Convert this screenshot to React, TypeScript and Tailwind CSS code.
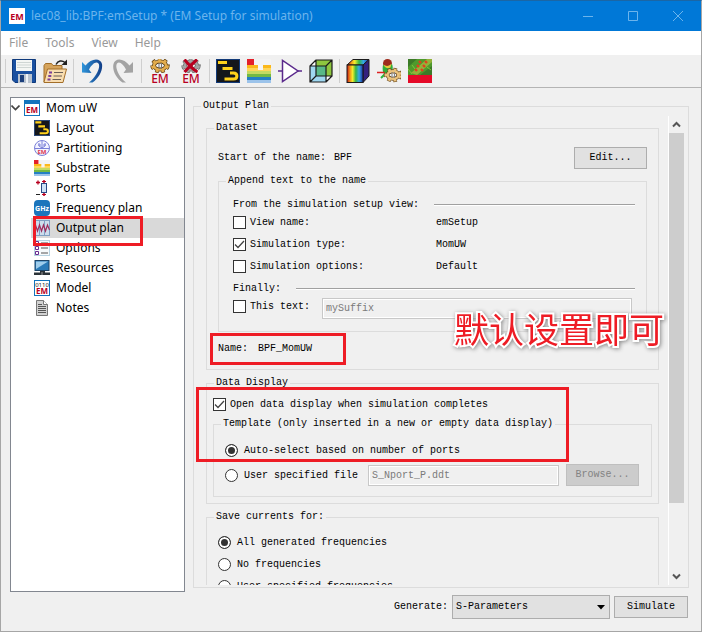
import { useState, type ReactNode } from "react";

const MONO = "font-['Liberation_Mono','Noto_Sans_CJK_SC',monospace] text-[10px] leading-4";

/* ---------- icons ---------- */

function Svg({ size, box = 24, children }: { size: number; box?: number; children: ReactNode }) {
  return (
    <svg width={size} height={size} viewBox={`0 0 ${box} ${box}`} className="block shrink-0" aria-hidden="true">
      {children}
    </svg>
  );
}

const RED = "#b8001f";
const EM_FONT = "'Noto Sans', 'Open Sans', sans-serif";

function EmText({ x, y, size, bold }: { x: number; y: number; size: number; bold?: boolean }) {
  return (
    <text x={x} y={y} textAnchor="middle" fontSize={size} fontWeight={bold ? 700 : 500} fontFamily={EM_FONT} fill={RED}>
      EM
    </text>
  );
}

function Gear({ cx, cy, r, fill, stroke }: { cx: number; cy: number; r: number; fill: string; stroke: string }) {
  return (
    <g>
      <ellipse cx={cx} cy={cy} rx={r} ry={r * 0.7} fill="none" stroke={stroke} strokeWidth="5.4" strokeDasharray="3 2.2" />
      <ellipse cx={cx} cy={cy} rx={r - 1} ry={r * 0.7 - 0.8} fill="none" stroke={stroke} strokeWidth="4" />
      <ellipse cx={cx} cy={cy} rx={r} ry={r * 0.7} fill="none" stroke={fill} strokeWidth="4" strokeDasharray="2.4 2.8" strokeDashoffset="-0.3" />
      <ellipse cx={cx} cy={cy} rx={r - 1} ry={r * 0.7 - 0.8} fill="none" stroke={fill} strokeWidth="2.4" />
    </g>
  );
}

function SaveIcon() {
  return (
    <Svg size={24}>
      <path d="M1 0.5h22.5v23H3L0.5 21V0.5z" fill="#1a50a0" stroke="#0f3a7c" />
      <rect x="4" y="1" width="16" height="11" fill="#f4f6f4" />
      <path d="M5 3.5h14M5 6h14M5 8.5h14" stroke="#cfd6d4" />
      <rect x="6" y="15" width="14" height="9" fill="#b9c3cf" />
      <rect x="8" y="16" width="4" height="7" fill="#1c3f7c" />
      <rect x="14" y="15" width="2" height="9" fill="#eef1f5" />
    </Svg>
  );
}

function OpenIcon() {
  return (
    <Svg size={24}>
      <path d="M1 23V6.5l1.500-2h6l1.500 2h9V11" fill="#d6a45c" stroke="#a36e28" />
      <path d="M1 23L4.500 10h19L20 23.500H1z" fill="#f8ddb0" stroke="#a36e28" />
      <path d="M6 13.500h3M5.300 17h3M4.500 20.500h3" stroke="#7b3f98" strokeWidth="2" />
      <path d="M11 13.500h9M10.500 17h8.500M9.500 20.500h8.500" stroke="#6b5f58" />
      <path d="M13 5.500C15 1.500 19 1 22 3.500" fill="none" stroke="#222" strokeWidth="1.500" />
      <path d="M24 0.500V6h-5.500z" fill="#222" />
    </Svg>
  );
}

function UndoIcon() {
  return (
    <Svg size={24}>
      <defs>
        <linearGradient id="undoFill" x1="0" x2="1">
          <stop offset="0" stopColor="#2f95da" />
          <stop offset="1" stopColor="#123e88" />
        </linearGradient>
      </defs>
      <path d="M2 3v10.500L11.500 14 9 10.500C12 5 16 2 18.500 4.500 21 8 16 18 9 23.500h3.500C19 19 23 11 22 5 20.500-1.500 11-1 5.500 6.500z" fill="url(#undoFill)" />
    </Svg>
  );
}

function RedoIcon() {
  return (
    <Svg size={24}>
      <path d="M22 3v10.500L12.500 14 15 10.500C12 5 8.500 2 6 4.500 3.500 8 8 18 15 23.500h-3.500C5 19 1 11 2.500 5 4-1.500 13-1 18.500 6.500z" fill="#a3a3a3" />
    </Svg>
  );
}

function EmGearIcon({ cancelled = false }: { cancelled?: boolean }) {
  return (
    <Svg size={24}>
      {cancelled ? (
        <Gear cx={12} cy={6.5} r={7} fill="#a4a4a4" stroke="#666" />
      ) : (
        <Gear cx={12} cy={6.5} r={7} fill="#e3ad4e" stroke="#5b3c10" />
      )}
      <path d="M11 4v6M13.500 4v6" stroke="#777" />
      {cancelled && <path d="M5.500 0.500C9 5 13 10 18.500 13M18 0.500C14 4 9 9 5.500 13" stroke={RED} strokeWidth="3" fill="none" />}
      <EmText x={12} y={23.5} size={12} />
    </Svg>
  );
}

function LayoutIcon({ size }: { size: number }) {
  return (
    <Svg size={size}>
      <rect x="0.500" y="0.500" width="23" height="23" fill="#15171b" stroke="#123a78" />
      <path d="M2 3.500h9M6.500 9.500h10" stroke="#ffd21c" strokeWidth="3.200" />
      <path d="M14 14h3.500c4.500 0 4.500 6 0 6H8.500" fill="none" stroke="#ffd21c" strokeWidth="3" />
    </Svg>
  );
}

function SubstrateIcon({ size }: { size: number }) {
  return (
    <Svg size={size}>
      <rect y="0" width="7" height="6" fill="#e3202b" />
      <path d="M0 6h16v6h0V6h8v7H0z" fill="#fbb81a" />
      <path d="M0 9h24v4H0z" fill="#ffd65a" />
      <rect x="11" y="0" width="5" height="11" fill="#f5f5f5" />
      <rect x="7" y="0" width="17" height="6" fill="#f3f3f3" />
      <rect y="12" width="24" height="3" fill="#c4da62" />
      <rect y="15" width="24" height="3" fill="#73b944" />
      <rect y="18" width="24" height="3" fill="#2480c4" />
      <rect y="21" width="24" height="3" fill="#9cc3ea" />
    </Svg>
  );
}

function BufferIcon() {
  return (
    <Svg size={24}>
      <path d="M4.500 1.500v21L20 12z" fill="#fff" stroke="#5b2a8c" strokeWidth="1.500" />
      <path d="M0 12h4.500M20 12h4" stroke="#5b2a8c" strokeWidth="1.500" />
    </Svg>
  );
}

function CubeIcon() {
  return (
    <Svg size={24}>
      <path d="M1 7l6-6h16v16l-6 6H1z" fill="#fff" />
      <path d="M7 1h16v16H17V7H7z" fill="#8dc63f" />
      <rect x="1" y="7" width="16" height="16" fill="#9fd7f0" />
      <rect x="7" y="7" width="10" height="10" fill="#58b887" />
      <path d="M1 7h16v16H1zM7 1h16v16H7zM1 7l6-6M17 7l6-6M17 23l6-6M1 23l6-6" fill="none" stroke="#1b1b1b" strokeWidth="1.200" />
    </Svg>
  );
}

function RainbowCubeIcon() {
  return (
    <Svg size={24}>
      <defs>
        <linearGradient id="rainbow" x1="0" x2="1">
          <stop offset="0" stopColor="#c81818" />
          <stop offset="0.200" stopColor="#f39a1a" />
          <stop offset="0.350" stopColor="#f4ee2c" />
          <stop offset="0.550" stopColor="#35b545" />
          <stop offset="0.750" stopColor="#35a8e8" />
          <stop offset="1" stopColor="#1c2e9c" />
        </linearGradient>
      </defs>
      <path d="M1 6l6-5.500h16L17 6z" fill="url(#rainbow)" stroke="#1b1b1b" />
      <path d="M17 6l6-5.500V17l-6 6.500z" fill="#34217e" stroke="#1b1b1b" />
      <rect x="1" y="6" width="16" height="17.500" fill="url(#rainbow)" stroke="#1b1b1b" />
    </Svg>
  );
}

function FarFieldIcon() {
  return (
    <Svg size={24}>
      <ellipse cx="10.500" cy="4.500" rx="4.500" ry="4.500" fill="#9d2a1c" />
      <path d="M6 6c-1 5 0 9 3 11l6-4c1-3 1-6 0-8-2 2-6 3-9 1z" fill="#2fae3a" />
      <path d="M6.500 5.500c2 2 6 2 8-1l-1 4c-2 1-4 1-6-1z" fill="#e8c83a" />
      <path d="M0 13.500h8" stroke="#d22" strokeWidth="1.500" />
      <path d="M9 14l-5 5" stroke="#28b438" strokeWidth="2" />
      <Gear cx={16} cy={16} r={6.5} fill="#ebc27c" stroke="#6b4a1c" />
      <path d="M15 13v6M17.500 13v6" stroke="#888" />
    </Svg>
  );
}

function FieldMapIcon() {
  return (
    <Svg size={24}>
      <rect width="24" height="24" fill="#4f9a2c" />
      <path d="M0 0h9L0 8zM24 7v9H12z" fill="#3c7a28" />
      <path d="M3 14L19 0h5v3L9 16z" fill="#93b13a" />
      <path d="M11 2l2 2M17 2l2 2M9 6l2 2M15 6l2 2M7 10l2 2M13 10l2 2" stroke="#e0401c" strokeWidth="2.400" />
      <path d="M0 10l4 5M4 6l3 4M19 8l4 3" stroke="#7cc83a" />
      <rect y="16" width="24" height="8" fill="#e50a28" />
    </Svg>
  );
}

function WindowEmIcon() {
  return (
    <Svg size={16} box={16}>
      <rect width="16" height="16" fill="#fff" />
      <EmText x={8} y={12} size={9} bold />
    </Svg>
  );
}

function TreeEmIcon() {
  return (
    <Svg size={16} box={16}>
      <rect x="0.500" y="0.500" width="15" height="15" fill="#fff" stroke="#1374bd" />
      <rect width="16" height="4" fill="#1374bd" />
      <EmText x={8} y={12.5} size={8} bold />
    </Svg>
  );
}

function PartitionIcon() {
  return (
    <Svg size={16} box={16}>
      <circle cx="8" cy="8" r="7.500" fill="#f3f3ff" stroke="#7a80d8" />
      <path d="M1 8.500h14M8 1v7M5 3v3l3 2 3-2V3M4 5h3M9 5h3" stroke="#7a80d8" fill="none" />
      <text x="8" y="14" textAnchor="middle" fontSize="6" fontWeight="700" fontFamily={EM_FONT} fill="#dd3a52">EM</text>
    </Svg>
  );
}

function PortsIcon() {
  return (
    <Svg size={16} box={16}>
      <path d="M2 2.500h4M4 0.500v4" stroke={RED} strokeWidth="1.300" />
      <path d="M2 14.500h4" stroke="#222" />
      <path d="M10 0v16" stroke={RED} strokeWidth="1.500" />
      <path d="M8 1.500h4M8 14.500h4" stroke={RED} />
      <rect x="7.500" y="3.500" width="5" height="9" fill="#cfe3f6" stroke="#2a4a84" />
    </Svg>
  );
}

function GhzIcon() {
  return (
    <Svg size={16} box={16}>
      <rect width="16" height="16" rx="4" fill="#1b75bc" />
      <text x="8" y="11" textAnchor="middle" fontSize="7" fontWeight="700" fontFamily={EM_FONT} fill="#fff">GHz</text>
    </Svg>
  );
}

function OutputIcon() {
  return (
    <Svg size={16} box={16}>
      <rect width="16" height="16" fill="#cddcec" />
      <path d="M0.500 0v16M5.500 0v16M10.500 0v16M15.500 0v16M0 0.500h16M0 15.500h16" stroke="#7f9fc2" />
      <path d="M0 8l1.500-3 2 6 2-6 2 6 2-6 2 6 2-6 2 5" fill="none" stroke="#a02c5c" strokeWidth="1.200" />
    </Svg>
  );
}

function OptionsIcon() {
  return (
    <Svg size={16} box={16}>
      <rect x="0.500" y="0.500" width="15" height="15" fill="#f6fafc" stroke="#b7d3e2" />
      <path d="M1.500 1.500h3v3h-3zM1.500 6.500h3v3h-3zM1.500 11.500h3v3h-3z" fill="#fff" stroke="#6a2c91" />
      <path d="M7 3h7M7 8h7M7 13h7" stroke="#8a8a8a" strokeWidth="1.500" />
    </Svg>
  );
}

function ResourcesIcon() {
  return (
    <Svg size={16} box={16}>
      <rect x="1" y="0.500" width="14" height="10" fill="#2a7ab8" stroke="#1c4468" />
      <path d="M2 1.500h12L2 9z" fill="#9fcdec" />
      <path d="M6 11h5v1.500H6zM0 12.500h16V15H0z" fill="#2c3338" />
      <path d="M8 12v3" stroke="#999" />
    </Svg>
  );
}

function ModelIcon() {
  return (
    <Svg size={16} box={16}>
      <rect x="0.500" y="0.500" width="15" height="15" fill="#fff" stroke="#1374bd" />
      <text x="8" y="6.500" textAnchor="middle" fontSize="6" fontFamily={EM_FONT} fill="#222">0110</text>
      <EmText x={8} y={14} size={8} bold />
    </Svg>
  );
}

function NotesIcon() {
  return (
    <Svg size={16} box={16}>
      <path d="M2.500 0.500h7l4 4v11h-11z" fill="#d2d2d2" stroke="#777" />
      <path d="M9.500 0.500v4h4" fill="#fff" stroke="#777" />
      <path d="M4 4.500h4M4 6.500h8M4 8.500h8M4 10.500h8M4 12.500h8" stroke="#555" />
    </Svg>
  );
}

/* ---------- controls ---------- */

function CheckBox({ label, initial = false }: { label: string; initial?: boolean }) {
  const [on, setOn] = useState(initial);
  return (
    <label className="flex h-[22px] items-center gap-1">
      <span className="grid">
        <input
          type="checkbox"
          checked={on}
          onChange={(e) => setOn(e.target.checked)}
          className="col-start-1 row-start-1 size-[13px] appearance-none border border-[#333] bg-white"
        />
        {on && (
          <svg width="13" height="13" viewBox="0 0 13 13" className="pointer-events-none col-start-1 row-start-1" aria-hidden="true">
            <path d="M2 6.500L5 9.500 11 3" fill="none" stroke="#444" strokeWidth="1.300" />
          </svg>
        )}
      </span>
      <span className="pt-0.5">{label}</span>
    </label>
  );
}

function Radio({ label, name, initial = false }: { label: string; name: string; initial?: boolean }) {
  return (
    <label className="flex h-[22px] shrink-0 items-center gap-1.5">
      <input
        type="radio"
        name={name}
        defaultChecked={initial}
        className="size-[13px] appearance-none rounded-full border border-[#333] bg-white checked:bg-[#333] checked:shadow-[inset_0_0_0_2px_#fff]"
      />
      <span className="pt-0.5">{label}</span>
    </label>
  );
}

/* Titled frame; the padding sits on an inner box so that the title keeps its own inset. */
function Group({ title, className = "", bodyClass, children }: { title: string; className?: string; bodyClass: string; children: ReactNode }) {
  return (
    <fieldset className={`min-w-0 border border-[#dcdcdc] ${className}`}>
      <legend className="ml-[7px] px-0.5">{title}</legend>
      <div className={`relative ${bodyClass}`}>{children}</div>
    </fieldset>
  );
}

function RuledHeading({ children }: { children: ReactNode }) {
  return (
    <div className="flex h-3 items-center gap-[15px]">
      {children}
      <hr className="h-0.5 flex-1 border-t border-b border-t-[#a0a0a0] border-b-white" />
    </div>
  );
}

const FIELD = "h-[21px] min-w-0 flex-1 border border-[#c8c8c8] bg-[#f0f0f0] px-[3px] text-[#7a7a7a] shadow-[inset_0_0_0_1px_#fff]";

function Highlight({ className }: { className: string }) {
  return <div className={`pointer-events-none absolute z-10 border-3 border-[#ee1c25] ${className}`} />;
}

/* ---------- sections ---------- */

function TitleBar() {
  return (
    <header className="flex h-[30px] items-center bg-[#0078d7] pl-2 text-[#6cb4ec]">
      <WindowEmIcon />
      <h1 className="ml-1.5 flex-1 text-xs">lec08_lib:BPF:emSetup * (EM Setup for simulation)</h1>
      <button aria-label="Minimize" className="grid h-full w-[45px] place-items-center">
        <svg width="10" height="10" viewBox="0 0 10 10"><path d="M0 5.500h10" stroke="currentColor" /></svg>
      </button>
      <button aria-label="Maximize" className="grid h-full w-[45px] place-items-center">
        <svg width="10" height="10" viewBox="0 0 10 10"><path d="M0.500 0.500h9v9h-9z" fill="none" stroke="currentColor" /></svg>
      </button>
      <button aria-label="Close" className="grid h-full w-[46px] place-items-center">
        <svg width="10" height="10" viewBox="0 0 10 10"><path d="M0 0l10 10M10 0L0 10" stroke="currentColor" /></svg>
      </button>
    </header>
  );
}

const MENUS = ["File", "Tools", "View", "Help"];

const TOOLS: { name: string; icon: ReactNode }[][] = [
  [
    { name: "Save", icon: <SaveIcon /> },
    { name: "Open", icon: <OpenIcon /> },
  ],
  [
    { name: "Undo", icon: <UndoIcon /> },
    { name: "Redo", icon: <RedoIcon /> },
  ],
  [
    { name: "Simulate EM", icon: <EmGearIcon /> },
    { name: "Stop EM", icon: <EmGearIcon cancelled /> },
  ],
  [
    { name: "Layout", icon: <LayoutIcon size={24} /> },
    { name: "Substrate", icon: <SubstrateIcon size={24} /> },
    { name: "Symbol", icon: <BufferIcon /> },
    { name: "3D view", icon: <CubeIcon /> },
  ],
  [
    { name: "Field view", icon: <RainbowCubeIcon /> },
    { name: "Far field", icon: <FarFieldIcon /> },
    { name: "Field map", icon: <FieldMapIcon /> },
  ],
];

const TREE: { name: string; icon: ReactNode }[] = [
  { name: "Layout", icon: <LayoutIcon size={16} /> },
  { name: "Partitioning", icon: <PartitionIcon /> },
  { name: "Substrate", icon: <SubstrateIcon size={16} /> },
  { name: "Ports", icon: <PortsIcon /> },
  { name: "Frequency plan", icon: <GhzIcon /> },
  { name: "Output plan", icon: <OutputIcon /> },
  { name: "Options", icon: <OptionsIcon /> },
  { name: "Resources", icon: <ResourcesIcon /> },
  { name: "Model", icon: <ModelIcon /> },
  { name: "Notes", icon: <NotesIcon /> },
];

function Tree() {
  return (
    <nav className="mb-[39px] w-[175px] shrink-0 border border-[#828790] bg-white text-xs leading-5 text-black">
      <div className="flex h-5 items-center">
        <svg width="9" height="6" viewBox="0 0 9 6" className="mr-1" aria-hidden="true">
          <path d="M0.500 0.500l4 4 4-4" fill="none" stroke="#444" strokeWidth="1.600" />
        </svg>
        <TreeEmIcon />
        <span className="ml-1.5">Mom uW</span>
      </div>
      <ul className="pl-5">
        {TREE.map((item) => {
          const selected = item.name === "Output plan";
          return (
            <li key={item.name} className={selected ? "relative bg-[#d9d9d9]" : ""}>
              <button className="flex h-5 w-full items-center gap-1.5 pl-[3px] text-left">
                {item.icon}
                {item.name}
              </button>
              {selected && <Highlight className="-top-0.5 left-0.5 h-[30px] w-[110px]" />}
            </li>
          );
        })}
      </ul>
    </nav>
  );
}

function DatasetGroup() {
  return (
    <Group title="Dataset" bodyClass="px-[11px] pt-[11px] pb-3">
      <div className="flex h-[22px] items-center">
        <span>Start of the name:</span>
        <span className="ml-2 flex-1">BPF</span>
        <button className="h-[22px] w-[73px] border border-[#adadad] bg-[#e1e1e1]">Edit...</button>
      </div>
      <Group title="Append text to the name" className="mt-1" bodyClass="pt-[10px] pr-[11px] pb-3 pl-[14px]">
        <RuledHeading>From the simulation setup view:</RuledHeading>
        <div className="grid grid-cols-[203px_1fr] items-center">
          <CheckBox label="View name:" />
          <span className="pt-0.5">emSetup</span>
          <CheckBox label="Simulation type:" initial />
          <span className="pt-0.5">MomUW</span>
          <CheckBox label="Simulation options:" />
          <span className="pt-0.5">Default</span>
        </div>
        <div className="mt-1.5">
          <RuledHeading>Finally:</RuledHeading>
        </div>
        <div className="mr-[3px] flex h-6 gap-3">
          <CheckBox label="This text:" />
          <input aria-label="Suffix text" disabled defaultValue="mySuffix" className={`${FIELD} self-end`} />
        </div>
      </Group>
      <div className="relative mt-[9px] flex gap-[10px]">
        <span>Name:</span>
        <span>BPF_MomUW</span>
        <Highlight className="-top-2 -left-2 h-8 w-[136px]" />
      </div>
    </Group>
  );
}

function DataDisplayGroup() {
  return (
    <Group title="Data Display" className="mt-[5px]" bodyClass="px-1.5 pt-0.5 pb-1.5">
      <CheckBox label="Open data display when simulation completes" initial />
      <Group title="Template (only inserted in a new or empty data display)" className="mt-px" bodyClass="pt-[7px] pr-3 pb-[10px] pl-[11px]">
        <Radio name="template" label="Auto-select based on number of ports" initial />
        <div className="mt-[3px] flex items-center">
          <Radio name="template" label="User specified file" />
          <input aria-label="Template file" disabled defaultValue="S_Nport_P.ddt" className={`${FIELD} ml-[10px]`} />
          <button disabled className="ml-[7px] h-[22px] w-[73px] border border-[#bfbfbf] bg-[#ccc] text-[#838383]">
            Browse...
          </button>
        </div>
      </Group>
      <Highlight className="-top-1 -left-[11px] h-[75px] w-[373px]" />
    </Group>
  );
}

function ScrollBar() {
  return (
    <div className="flex w-4 shrink-0 flex-col border-l border-white" aria-hidden="true">
      <svg width="15" height="17" viewBox="0 0 15 17" className="shrink-0">
        <path d="M4 10.500l3.500-3.500 3.500 3.500" fill="none" stroke="#555" strokeWidth="2" />
      </svg>
      <div className="min-h-0 flex-1">
        <div className="h-[85%] bg-[#cdcdcd]" />
      </div>
      <svg width="15" height="17" viewBox="0 0 15 17" className="shrink-0">
        <path d="M4 6.500l3.500 3.500 3.500-3.500" fill="none" stroke="#555" strokeWidth="2" />
      </svg>
    </div>
  );
}

export default function App() {
  return (
    <div className="flex h-screen flex-col overflow-hidden border border-[#a6a6a6] border-t-[#1b66a5] bg-[#f0f0f0] font-['Noto_Sans','Noto_Sans_CJK_SC',sans-serif]">
      <TitleBar />
      <nav className="flex h-[24px] shrink-0 items-center gap-[17px] bg-white pl-2 text-xs text-[#999]">
        {MENUS.map((m) => (
          <button key={m}>{m}</button>
        ))}
      </nav>
      <div className="flex h-[33px] shrink-0 items-center gap-1.5 border-b border-b-[#b4b4b4] pl-1">
        {TOOLS.map((group) => (
          <div key={group[0].name} className="flex items-center gap-1.5">
            <div className="h-6 w-px bg-[#cfcfcf]" />
            <div className="flex gap-[7px]">
              {group.map((t) => (
                <button key={t.name} aria-label={t.name}>
                  {t.icon}
                </button>
              ))}
            </div>
          </div>
        ))}
      </div>

      <main className="flex min-h-0 flex-1 gap-2 pt-[9px] pr-3 pl-[9px]">
        <Tree />
        <div className={`flex min-w-0 flex-1 flex-col pt-px text-black ${MONO}`}>
          <fieldset className="flex min-h-0 min-w-0 flex-1 border border-[#dcdcdc] pr-1 pb-0.5">
            <legend className="ml-[7px] px-0.5">Output Plan</legend>
            <div className="relative min-w-0 flex-1 overflow-hidden pt-1.5 pr-[9px] pl-3">
              <DatasetGroup />
              <DataDisplayGroup />
              <Group title="Save currents for:" className="mt-[5px]" bodyClass="pt-1.5 pb-3 pl-[11px]">
                <Radio name="currents" label="All generated frequencies" initial />
                <Radio name="currents" label="No frequencies" />
                <Radio name="currents" label="User specified frequencies" />
              </Group>
              <p className="pointer-events-none absolute top-[190px] right-1 z-10 font-['Noto_Sans_CJK_SC',sans-serif] text-[35px] leading-[48px] whitespace-nowrap text-[#ee1c25] drop-shadow-[1px_1px_2px_#888] [-webkit-text-stroke:4px_white] [paint-order:stroke_fill]">
                默认设置即可
              </p>
            </div>
            <div className="flex pt-0.5">
              <ScrollBar />
            </div>
          </fieldset>
          <div className="flex h-[43px] shrink-0 items-center justify-end gap-1 pr-px pb-[5px]">
            <label htmlFor="generate">Generate:</label>
            <div className="grid items-center">
              <select id="generate" className="col-start-1 row-start-1 h-6 w-[158px] appearance-none border border-[#adadad] bg-[#e1e1e1] px-[3px]">
                <option>S-Parameters</option>
              </select>
              <svg width="8" height="5" viewBox="0 0 8 5" className="pointer-events-none col-start-1 row-start-1 mr-[5px] justify-self-end" aria-hidden="true">
                <path d="M0 0h8L4 4.500z" fill="#000" />
              </svg>
            </div>
            <button className="h-[22px] w-[74px] border border-[#adadad] bg-[#e1e1e1]">Simulate</button>
          </div>
        </div>
      </main>
    </div>
  );
}
